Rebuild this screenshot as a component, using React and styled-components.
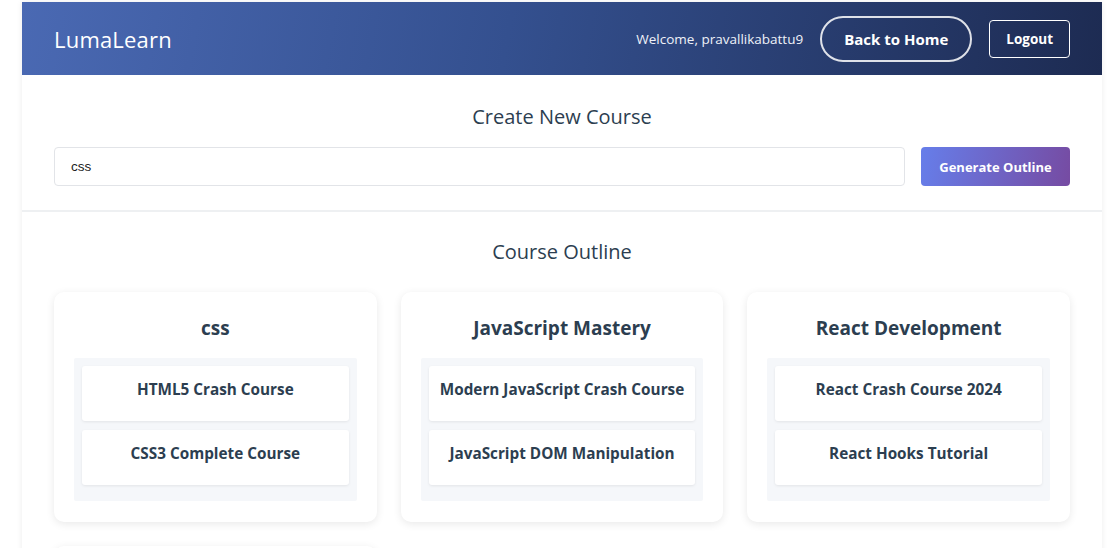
import React from 'react';
import styled, { createGlobalStyle } from 'styled-components';

const GlobalStyle = createGlobalStyle`
  body {
    margin: 0;
    background: #ffffff;
    font-family: 'Open Sans', 'Noto Sans', sans-serif;
    color: #2c3e50;
  }
`;

const Page = styled.div`
  padding: 2px 14px 0 22px;
`;

const Container = styled.div`
  background: #fff;
  box-shadow: 0 0 6px rgba(0, 0, 0, 0.08);
  min-height: 546px;
`;

const Header = styled.header`
  height: 73px;
  display: flex;
  align-items: center;
  justify-content: space-between;
  padding: 0 32px;
  background: linear-gradient(100deg, #4a69b3 0%, #34508f 45%, #1d2b52 100%);
  color: #fff;
`;

const Logo = styled.div`
  font-size: 22px;
  letter-spacing: 0.2px;
`;

const Nav = styled.div`
  display: flex;
  align-items: center;
`;

const Welcome = styled.span`
  font-size: 13.5px;
  margin-right: 17px;
  color: #eef1f8;
`;

const NavButton = styled.button`
  font-family: inherit;
  color: #fff;
  background: transparent;
  font-weight: 700;
  cursor: pointer;
  border: ${(p) => (p.$pill ? '2px solid rgba(255,255,255,0.85)' : '1px solid #fff')};
  border-radius: ${(p) => (p.$pill ? '24px' : '4px')};
  height: ${(p) => (p.$pill ? '46px' : '38px')};
  padding: ${(p) => (p.$pill ? '0 22px' : '0 16px')};
  font-size: ${(p) => (p.$pill ? '15px' : '13.5px')};
  margin-left: ${(p) => (p.$pill ? '0' : '17px')};
`;

const CreateSection = styled.section`
  padding: 28px 32px 24px;
  border-bottom: 2px solid #eef0f2;
`;

const SectionTitle = styled.h2`
  margin: 0;
  text-align: center;
  font-weight: 400;
  font-size: 20px;
  color: #2c3e50;
`;

const Form = styled.div`
  display: flex;
  gap: 16px;
  margin-top: 17px;
`;

const Input = styled.input`
  flex: 1;
  height: 39px;
  box-sizing: border-box;
  border: 1px solid #e2e4e8;
  border-radius: 4px;
  padding: 0 16px;
  font-family: 'Liberation Sans', Arial, sans-serif;
  font-size: 13.5px;
  color: #222;
  outline: none;
`;

const GenerateButton = styled.button`
  width: 149px;
  height: 39px;
  border: none;
  border-radius: 4px;
  background: linear-gradient(100deg, #667eea 0%, #764ba2 100%);
  color: #fff;
  font-family: inherit;
  font-weight: 700;
  font-size: 13px;
`;

const OutlineSection = styled.section`
  padding: 26px 32px 0;
`;

const CardGrid = styled.div`
  display: grid;
  grid-template-columns: repeat(3, 1fr);
  gap: 24px;
  margin-top: 27px;
`;

const Card = styled.div`
  background: #fff;
  border-radius: 10px;
  box-shadow: 0 2px 8px rgba(0, 0, 0, 0.09);
  padding: 23px 20px 21px;
`;

const CardTitle = styled.h3`
  margin: 0 0 17px;
  text-align: center;
  font-size: 19px;
  font-weight: 700;
  color: #2c3e50;
`;

const ItemList = styled.div`
  background: #f5f7fa;
  padding: 8px 8px 16px;
  display: flex;
  flex-direction: column;
  gap: 9px;
  border-radius: 2px;
`;

const Item = styled.div`
  background: #fff;
  height: 55px;
  box-sizing: border-box;
  padding-top: 13px;
  border-radius: 3px;
  box-shadow: 0 1px 3px rgba(0, 0, 0, 0.08);
  text-align: center;
  font-weight: 700;
  font-size: 15.3px;
  color: #2c3e50;
`;

const courses = [
  { title: 'css', items: ['HTML5 Crash Course', 'CSS3 Complete Course'] },
  { title: 'JavaScript Mastery', items: ['Modern JavaScript Crash Course', 'JavaScript DOM Manipulation'] },
  { title: 'React Development', items: ['React Crash Course 2024', 'React Hooks Tutorial'] },
];

export default function App() {
  return (
    <Page>
      <GlobalStyle />
      <Container>
        <Header>
          <Logo>LumaLearn</Logo>
          <Nav>
            <Welcome>Welcome, pravallikabattu9</Welcome>
            <NavButton $pill>Back to Home</NavButton>
            <NavButton>Logout</NavButton>
          </Nav>
        </Header>

        <CreateSection>
          <SectionTitle>Create New Course</SectionTitle>
          <Form>
            <Input defaultValue="css" />
            <GenerateButton>Generate Outline</GenerateButton>
          </Form>
        </CreateSection>

        <OutlineSection>
          <SectionTitle>Course Outline</SectionTitle>
          <CardGrid>
            {courses.map((c) => (
              <Card key={c.title}>
                <CardTitle>{c.title}</CardTitle>
                <ItemList>
                  {c.items.map((i) => (
                    <Item key={i}>{i}</Item>
                  ))}
                </ItemList>
              </Card>
            ))}
            <Card />
          </CardGrid>
        </OutlineSection>
      </Container>
    </Page>
  );
}
